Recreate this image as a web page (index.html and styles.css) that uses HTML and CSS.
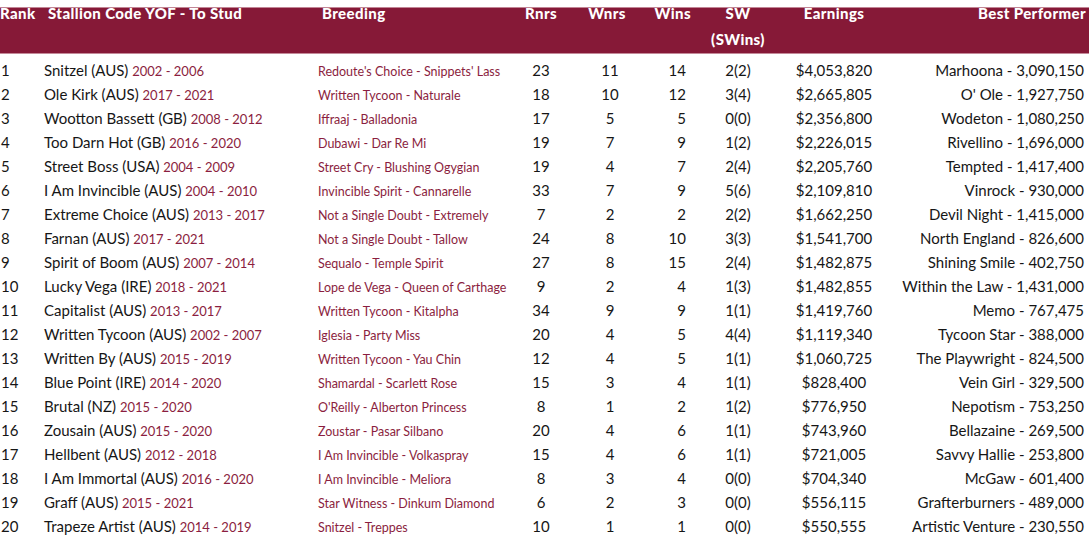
FILE: index.html
```html
<!DOCTYPE html>
<html>
<head>
<meta charset="utf-8">
<link rel="stylesheet" href="styles.css">
</head>
<body>
<div class="table">
  <div class="row head">
    <div class="c rank"><span class="h">Rank</span></div>
    <div class="c stallion"><span class="h hs">Stallion Code YOF - To Stud</span></div>
    <div class="c breeding"><span class="h hs">Breeding</span></div>
    <div class="c num rnrs"><span class="h">Rnrs</span></div>
    <div class="c num wnrs"><span class="h hw">Wnrs</span></div>
    <div class="c wins"><span class="h hwins">Wins</span></div>
    <div class="c num sw"><span class="h">SW<br>(SWins)</span></div>
    <div class="c num earn"><span class="h">Earnings</span></div>
    <div class="c best"><span class="h hbest">Best Performer</span></div>
  </div>
  <div class="body">
    <div class="row"><div class="c rank">1</div><div class="c stallion">Snitzel (AUS) <span class="yr">2002 - 2006</span></div><div class="c breeding">Redoute's Choice - Snippets' Lass</div><div class="c num rnrs">23</div><div class="c num wnrs">11</div><div class="c wins">14</div><div class="c num sw">2(2)</div><div class="c num earn">$4,053,820</div><div class="c best">Marhoona - 3,090,150</div></div>
    <div class="row"><div class="c rank">2</div><div class="c stallion">Ole Kirk (AUS) <span class="yr">2017 - 2021</span></div><div class="c breeding">Written Tycoon - Naturale</div><div class="c num rnrs">18</div><div class="c num wnrs">10</div><div class="c wins">12</div><div class="c num sw">3(4)</div><div class="c num earn">$2,665,805</div><div class="c best">O' Ole - 1,927,750</div></div>
    <div class="row"><div class="c rank">3</div><div class="c stallion">Wootton Bassett (GB) <span class="yr">2008 - 2012</span></div><div class="c breeding">Iffraaj - Balladonia</div><div class="c num rnrs">17</div><div class="c num wnrs">5</div><div class="c wins">5</div><div class="c num sw">0(0)</div><div class="c num earn">$2,356,800</div><div class="c best">Wodeton - 1,080,250</div></div>
    <div class="row"><div class="c rank">4</div><div class="c stallion">Too Darn Hot (GB) <span class="yr">2016 - 2020</span></div><div class="c breeding">Dubawi - Dar Re Mi</div><div class="c num rnrs">19</div><div class="c num wnrs">7</div><div class="c wins">9</div><div class="c num sw">1(2)</div><div class="c num earn">$2,226,015</div><div class="c best">Rivellino - 1,696,000</div></div>
    <div class="row"><div class="c rank">5</div><div class="c stallion">Street Boss (USA) <span class="yr">2004 - 2009</span></div><div class="c breeding">Street Cry - Blushing Ogygian</div><div class="c num rnrs">19</div><div class="c num wnrs">4</div><div class="c wins">7</div><div class="c num sw">2(4)</div><div class="c num earn">$2,205,760</div><div class="c best">Tempted - 1,417,400</div></div>
    <div class="row"><div class="c rank">6</div><div class="c stallion">I Am Invincible (AUS) <span class="yr">2004 - 2010</span></div><div class="c breeding">Invincible Spirit - Cannarelle</div><div class="c num rnrs">33</div><div class="c num wnrs">7</div><div class="c wins">9</div><div class="c num sw">5(6)</div><div class="c num earn">$2,109,810</div><div class="c best">Vinrock - 930,000</div></div>
    <div class="row"><div class="c rank">7</div><div class="c stallion">Extreme Choice (AUS) <span class="yr">2013 - 2017</span></div><div class="c breeding">Not a Single Doubt - Extremely</div><div class="c num rnrs">7</div><div class="c num wnrs">2</div><div class="c wins">2</div><div class="c num sw">2(2)</div><div class="c num earn">$1,662,250</div><div class="c best">Devil Night - 1,415,000</div></div>
    <div class="row"><div class="c rank">8</div><div class="c stallion">Farnan (AUS) <span class="yr">2017 - 2021</span></div><div class="c breeding">Not a Single Doubt - Tallow</div><div class="c num rnrs">24</div><div class="c num wnrs">8</div><div class="c wins">10</div><div class="c num sw">3(3)</div><div class="c num earn">$1,541,700</div><div class="c best">North England - 826,600</div></div>
    <div class="row"><div class="c rank">9</div><div class="c stallion">Spirit of Boom (AUS) <span class="yr">2007 - 2014</span></div><div class="c breeding">Sequalo - Temple Spirit</div><div class="c num rnrs">27</div><div class="c num wnrs">8</div><div class="c wins">15</div><div class="c num sw">2(4)</div><div class="c num earn">$1,482,875</div><div class="c best">Shining Smile - 402,750</div></div>
    <div class="row"><div class="c rank">10</div><div class="c stallion">Lucky Vega (IRE) <span class="yr">2018 - 2021</span></div><div class="c breeding">Lope de Vega - Queen of Carthage</div><div class="c num rnrs">9</div><div class="c num wnrs">2</div><div class="c wins">4</div><div class="c num sw">1(3)</div><div class="c num earn">$1,482,855</div><div class="c best">Within the Law - 1,431,000</div></div>
    <div class="row"><div class="c rank">11</div><div class="c stallion">Capitalist (AUS) <span class="yr">2013 - 2017</span></div><div class="c breeding">Written Tycoon - Kitalpha</div><div class="c num rnrs">34</div><div class="c num wnrs">9</div><div class="c wins">9</div><div class="c num sw">1(1)</div><div class="c num earn">$1,419,760</div><div class="c best">Memo - 767,475</div></div>
    <div class="row"><div class="c rank">12</div><div class="c stallion">Written Tycoon (AUS) <span class="yr">2002 - 2007</span></div><div class="c breeding">Iglesia - Party Miss</div><div class="c num rnrs">20</div><div class="c num wnrs">4</div><div class="c wins">5</div><div class="c num sw">4(4)</div><div class="c num earn">$1,119,340</div><div class="c best">Tycoon Star - 388,000</div></div>
    <div class="row"><div class="c rank">13</div><div class="c stallion">Written By (AUS) <span class="yr">2015 - 2019</span></div><div class="c breeding">Written Tycoon - Yau Chin</div><div class="c num rnrs">12</div><div class="c num wnrs">4</div><div class="c wins">5</div><div class="c num sw">1(1)</div><div class="c num earn">$1,060,725</div><div class="c best">The Playwright - 824,500</div></div>
    <div class="row"><div class="c rank">14</div><div class="c stallion">Blue Point (IRE) <span class="yr">2014 - 2020</span></div><div class="c breeding">Shamardal - Scarlett Rose</div><div class="c num rnrs">15</div><div class="c num wnrs">3</div><div class="c wins">4</div><div class="c num sw">1(1)</div><div class="c num earn">$828,400</div><div class="c best">Vein Girl - 329,500</div></div>
    <div class="row"><div class="c rank">15</div><div class="c stallion">Brutal (NZ) <span class="yr">2015 - 2020</span></div><div class="c breeding">O'Reilly - Alberton Princess</div><div class="c num rnrs">8</div><div class="c num wnrs">1</div><div class="c wins">2</div><div class="c num sw">1(2)</div><div class="c num earn">$776,950</div><div class="c best">Nepotism - 753,250</div></div>
    <div class="row"><div class="c rank">16</div><div class="c stallion">Zousain (AUS) <span class="yr">2015 - 2020</span></div><div class="c breeding">Zoustar - Pasar Silbano</div><div class="c num rnrs">20</div><div class="c num wnrs">4</div><div class="c wins">6</div><div class="c num sw">1(1)</div><div class="c num earn">$743,960</div><div class="c best">Bellazaine - 269,500</div></div>
    <div class="row"><div class="c rank">17</div><div class="c stallion">Hellbent (AUS) <span class="yr">2012 - 2018</span></div><div class="c breeding">I Am Invincible - Volkaspray</div><div class="c num rnrs">15</div><div class="c num wnrs">4</div><div class="c wins">6</div><div class="c num sw">1(1)</div><div class="c num earn">$721,005</div><div class="c best">Savvy Hallie - 253,800</div></div>
    <div class="row"><div class="c rank">18</div><div class="c stallion">I Am Immortal (AUS) <span class="yr">2016 - 2020</span></div><div class="c breeding">I Am Invincible - Meliora</div><div class="c num rnrs">8</div><div class="c num wnrs">3</div><div class="c wins">4</div><div class="c num sw">0(0)</div><div class="c num earn">$704,340</div><div class="c best">McGaw - 601,400</div></div>
    <div class="row"><div class="c rank">19</div><div class="c stallion">Graff (AUS) <span class="yr">2015 - 2021</span></div><div class="c breeding">Star Witness - Dinkum Diamond</div><div class="c num rnrs">6</div><div class="c num wnrs">2</div><div class="c wins">3</div><div class="c num sw">0(0)</div><div class="c num earn">$556,115</div><div class="c best">Grafterburners - 489,000</div></div>
    <div class="row"><div class="c rank">20</div><div class="c stallion">Trapeze Artist (AUS) <span class="yr">2014 - 2019</span></div><div class="c breeding">Snitzel - Treppes</div><div class="c num rnrs">10</div><div class="c num wnrs">1</div><div class="c wins">1</div><div class="c num sw">0(0)</div><div class="c num earn">$550,555</div><div class="c best">Artistic Venture - 230,550</div></div>
  </div>
</div>
</body>
</html>
```

FILE: styles.css
```css
html, body {
  margin: 0;
  padding: 0;
  background: #ffffff;
}
body {
  font-family: "Lato", "Liberation Sans", sans-serif;
  color: #161616;
  width: 1089px;
  height: 555px;
  overflow: hidden;
}
.row {
  display: grid;
  grid-template-columns: 44px 274px 198px 50px 88px 37px 94px 98px 1fr;
  align-items: baseline;
  height: 24px;
}
.c {
  white-space: nowrap;
  line-height: 24px;
  font-size: 15px;
}
.rank { padding-left: 1px; }
.num { text-align: center; }
.wins { text-align: right; padding-right: 5px; }
.best { text-align: right; padding-right: 5px; }
.yr {
  font-size: 13px;
  color: #8b1e40;
}
.breeding {
  font-size: 12.5px;
  color: #8b1e40;
}
.head {
  margin-top: 7px;
  height: 45px;
  background: #861937;
  border-top: 1px solid #c28595;
  border-bottom: 1px solid #c48a99;
  align-items: start;
}
.head .c {
  color: #ffffff;
  font-weight: 900;
  font-size: 15px;
  letter-spacing: 0.4px;
  line-height: 26px;
  margin-top: -8px;
}
.head .hs { padding-left: 4px; }
.head .rank { padding-left: 0; }
.head .hw { position: relative; left: -3px; }
.head .wins { padding-right: 0; }
.head .best { padding-right: 3px; }
.body {
  padding-top: 4px;
}
```
